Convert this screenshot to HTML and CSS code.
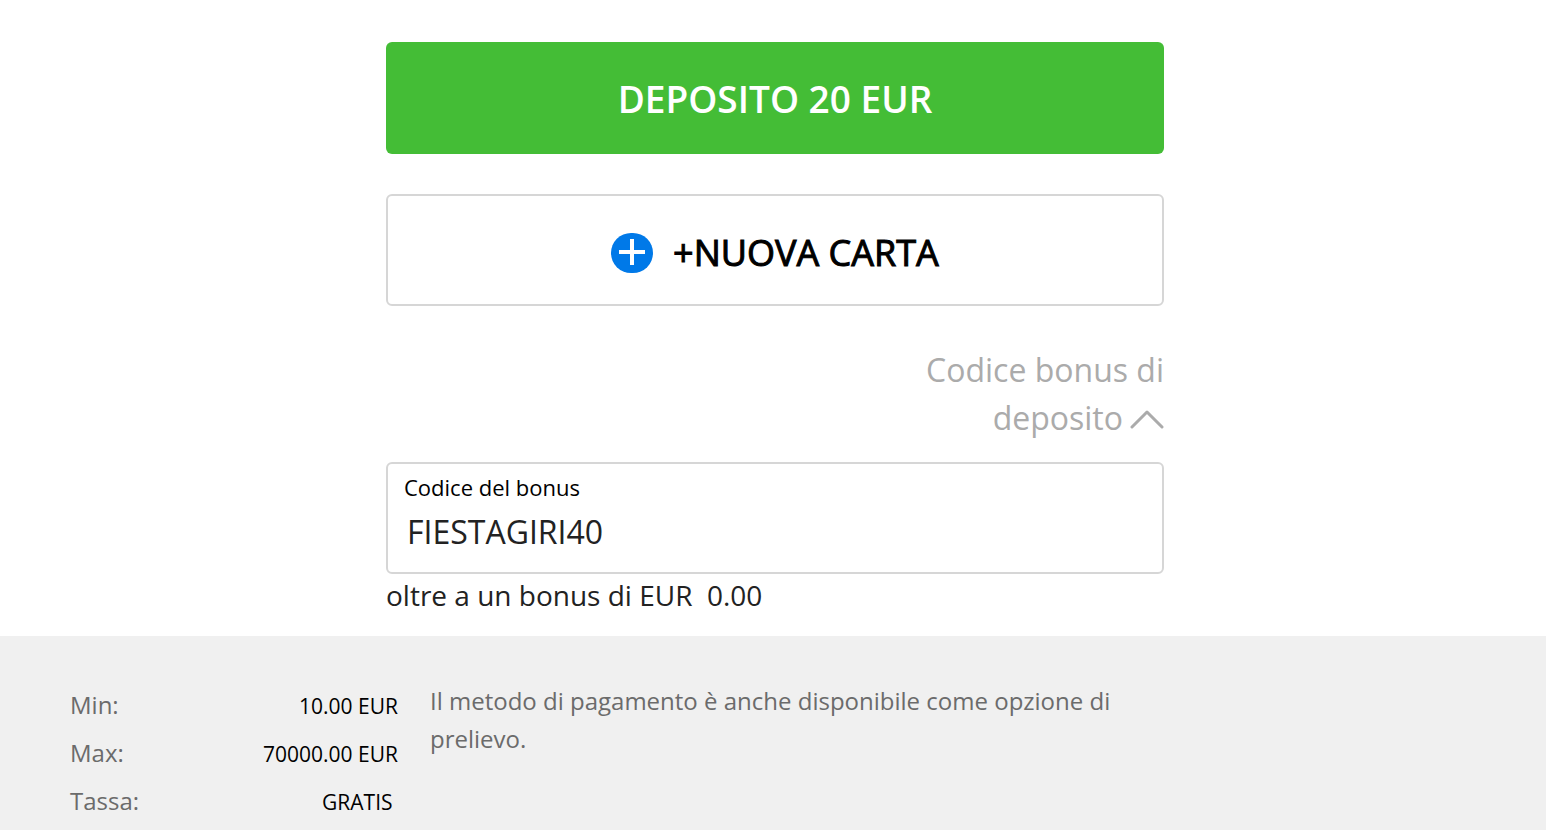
FILE: index.html
```html
<!DOCTYPE html>
<html lang="it">
<head>
<meta charset="utf-8">
<meta name="viewport" content="width=device-width, initial-scale=1">
<title>Deposito</title>
<link rel="stylesheet" href="styles.css">
</head>
<body>
<main class="cashier">
  <form class="deposit">
    <button class="btn btn-primary" type="submit">DEPOSITO 20 EUR</button>
    <button class="btn btn-outline" type="button">
      <svg class="plus" viewBox="0 0 42 40" aria-hidden="true"><rect width="42" height="40" rx="20" fill="#0079e8"/><path d="M21 6V32M8 19H34" stroke="#fff" stroke-width="4" fill="none"/></svg>
      <span>+NUOVA CARTA</span>
    </button>
    <button class="toggle" type="button">Codice bonus di deposito<svg class="chevron" viewBox="0 0 34 20" aria-hidden="true"><path d="M2 17L17 2L32 17" fill="none" stroke="currentColor" stroke-width="3" stroke-linecap="round" stroke-linejoin="round"/></svg></button>
    <div class="field">
      <label class="field-label" for="bonus">Codice del bonus</label>
      <input class="field-input" id="bonus" type="text" value="FIESTAGIRI40">
    </div>
    <p class="bonus-note">oltre a un bonus di EUR &nbsp;0.00</p>
  </form>
</main>
<footer class="info">
  <dl class="limits">
    <div class="limit"><dt>Min:</dt><dd>10.00 EUR</dd></div>
    <div class="limit"><dt>Max:</dt><dd>70000.00 EUR</dd></div>
    <div class="limit"><dt>Tassa:</dt><dd>GRATIS&nbsp;</dd></div>
  </dl>
  <p class="info-text">Il metodo di pagamento è anche disponibile come opzione di prelievo.</p>
</footer>
</body>
</html>
```
FILE: styles.css
```css
* { box-sizing: border-box; }
body {
  margin: 0;
  min-height: 100vh;
  display: flex;
  flex-direction: column;
  background: #fff;
  color: #222;
  font-family: "Open Sans", sans-serif;
}
button, input { font-family: inherit; }
.cashier { padding: 42px 24px 20px 28px; }
.deposit {
  display: flex;
  flex-direction: column;
  max-width: 778px;
  margin: 0 auto;
}
.btn {
  display: flex;
  align-items: center;
  justify-content: center;
  gap: 20px;
  min-height: 112px;
  border-radius: 6px;
  cursor: pointer;
}
.btn-primary {
  border: 0;
  background: #44bd36;
  color: #fff;
  font-size: 37px;
  font-weight: 600;
}
.btn-outline {
  margin-top: 40px;
  padding-top: 6px;
  border: 2px solid #d6d6d6;
  background: #fff;
  color: #000;
  font-size: 36px;
  font-weight: 400;
  -webkit-text-stroke: 1px #000;
}
.plus { width: 42px; height: 40px; }
.toggle {
  align-self: flex-end;
  max-width: 280px;
  margin-top: 40px;
  padding: 0;
  border: 0;
  background: none;
  color: #ababab;
  font-size: 32px;
  line-height: 48px;
  text-align: right;
  cursor: pointer;
}
.chevron { width: 34px; height: 20px; margin-left: 7px; }
.field {
  display: flex;
  flex-direction: column;
  min-height: 112px;
  margin-top: 20px;
  padding: 7px 16px;
  border: 2px solid #d6d6d6;
  border-radius: 6px;
}
.field-label { color: #000; font-size: 22px; line-height: 32px; }
.field-input {
  width: 100%;
  height: 56px;
  padding: 0 3px;
  border: 0;
  outline: 0;
  background: none;
  color: #222;
  font-size: 32px;
}
.bonus-note { margin: 0; font-size: 28px; line-height: 42px; }
.info {
  flex: 1;
  display: flex;
  gap: 32px;
  padding: 46px 70px 4px;
  background: #f0f0f0;
  color: #6b6b6b;
  font-size: 24px;
}
.limits { flex: 0 0 328px; margin: 0; }
.limit { display: flex; align-items: baseline; justify-content: space-between; height: 48px; line-height: 46px; }
.limit dd { margin: 0; color: #000; font-size: 21px; }
.info-text { max-width: 720px; margin: 0; line-height: 38px; }
```
